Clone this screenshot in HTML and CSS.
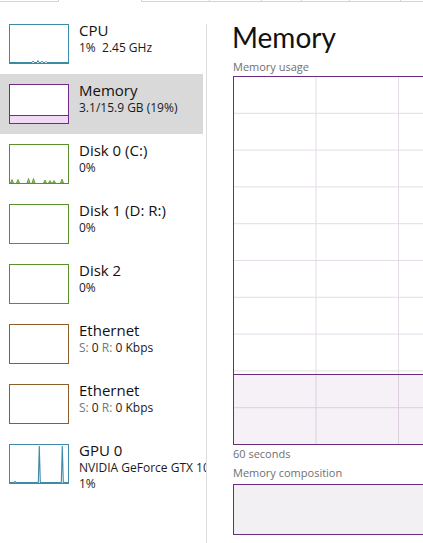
FILE: index.html
```html
<!DOCTYPE html>
<html>
<head>
<meta charset="utf-8">
<link rel="stylesheet" href="styles.css">
</head>
<body>
<div class="tabs">
  <div class="tab t1"></div>
  <div class="tab t2 active"></div>
  <div class="tab t3"></div>
  <div class="tab t4"></div>
  <div class="tab t5"></div>
  <div class="tab t6"></div>
  <div class="tab t7"></div>
  <div class="tab t8"></div>
</div>
<div class="main">
  <div class="sidebar">
    <div class="item">
      <div class="thumb cpu">
        <svg viewBox="0 0 58 38" width="58" height="38"><polyline points="0,37.5 22,37.5 23,36 24,37.5 27,37.5 28,35.5 29,37.5 31,37.5 32,36 33,37.5 35,37.5 36,36.5 37,37.5 58,37.5" fill="none" stroke="#3a8ba3" stroke-width="1"/></svg>
      </div>
      <div class="info">
        <div class="name">CPU</div>
        <div class="sub">1%&nbsp; 2.45 GHz</div>
      </div>
    </div>
    <div class="item selected">
      <div class="thumb mem">
        <div class="memfill"></div>
      </div>
      <div class="info">
        <div class="name">Memory</div>
        <div class="sub">3.1/15.9 GB (19%)</div>
      </div>
    </div>
    <div class="item">
      <div class="thumb disk">
        <svg viewBox="0 0 58 38" width="58" height="38">
          <g fill="#9cc87a" stroke="#5b8f2c" stroke-width="0.8">
            <polygon points="0.5,38 2,34.5 3.5,38"/>
            <polygon points="6.5,38 8,34.5 9.5,38"/>
            <polygon points="17,38 18.5,33.5 20,38"/>
            <polygon points="22,38 23.5,33.5 25,38"/>
            <polygon points="33.5,38 35,35 36.5,38"/>
            <polygon points="38.5,38 40,35.5 41.5,38"/>
            <polygon points="42.5,38 44,35.5 45.5,38"/>
            <polygon points="50.5,38 52,34 53.5,38"/>
          </g>
        </svg>
      </div>
      <div class="info">
        <div class="name">Disk 0 (C:)</div>
        <div class="sub">0%</div>
      </div>
    </div>
    <div class="item">
      <div class="thumb disk"></div>
      <div class="info">
        <div class="name">Disk 1 (D: R:)</div>
        <div class="sub">0%</div>
      </div>
    </div>
    <div class="item">
      <div class="thumb disk"></div>
      <div class="info">
        <div class="name">Disk 2</div>
        <div class="sub">0%</div>
      </div>
    </div>
    <div class="item">
      <div class="thumb eth"></div>
      <div class="info">
        <div class="name">Ethernet</div>
        <div class="sub"><span class="lbl">S:</span> 0 <span class="lbl">R:</span> 0 Kbps</div>
      </div>
    </div>
    <div class="item">
      <div class="thumb eth"></div>
      <div class="info">
        <div class="name">Ethernet</div>
        <div class="sub"><span class="lbl">S:</span> 0 <span class="lbl">R:</span> 0 Kbps</div>
      </div>
    </div>
    <div class="item">
      <div class="thumb gpu">
        <svg viewBox="0 0 58 38" width="58" height="38"><polyline points="0,37.5 4,37.5 5,36.5 6,37.5 28.3,37.5 29.3,1 30.3,37.5 51.3,37.5 52.3,1 53.3,37.5 58,37.5" fill="none" stroke="#3f8aa8" stroke-width="1.1"/></svg>
      </div>
      <div class="info">
        <div class="name">GPU 0</div>
        <div class="sub">NVIDIA GeForce GTX 1060</div>
        <div class="sub">1%</div>
      </div>
    </div>
  </div>
  <div class="divider"></div>
  <div class="pane">
    <div class="title">Memory</div>
    <div class="label">Memory usage</div>
    <div class="chart">
      <div class="spacer"></div>
      <div class="used" style="height:19%"></div>
    </div>
    <div class="label l60">60 seconds</div>
    <div class="label lcomp">Memory composition</div>
    <div class="comp"></div>
  </div>
</div>
</body>
</html>
```
FILE: styles.css
```css
html, body {
  margin: 0;
  padding: 0;
  background: #ffffff;
  width: 423px;
  height: 543px;
  overflow: hidden;
  font-family: "Open Sans", "Noto Sans", sans-serif;
  color: #111;
}

.tabs {
  display: flex;
  height: 2px;
}
.tab {
  box-sizing: border-box;
  height: 2px;
  border-bottom: 1px solid #d4d4d4;
  border-right: 1px solid #d4d4d4;
}
.tab.active { border-bottom: none; }
.t1 { width: 59px; }
.t2 { width: 83px; }
.t3 { width: 68px; }
.t4 { width: 52px; }
.t5 { width: 40px; }
.t6 { width: 48px; }
.t7 { width: 51px; }
.t8 { flex: 1; border-right: none; }

.main {
  display: flex;
  height: 541px;
}

.sidebar {
  width: 206px;
  flex: none;
  overflow: hidden;
  padding-top: 12px;
}

.item {
  width: 203px;
  height: 60px;
  box-sizing: border-box;
  padding: 10px 0 10px 9px;
  display: flex;
  gap: 10px;
  align-items: flex-start;
  white-space: nowrap;
}
.item.selected { background: #d9d9d9; }

.thumb {
  box-sizing: border-box;
  width: 60px;
  height: 40px;
  flex: none;
  border: 1px solid;
  background: #fff;
  display: flex;
  flex-direction: column;
  justify-content: flex-end;
}
.thumb svg { display: block; }
.cpu { border-color: #3a8ba3; }
.mem { border-color: #6f2c87; }
.disk { border-color: #5b8f2c; }
.eth { border-color: #8b5e2e; }
.gpu { border-color: #3f8aa8; }

.memfill {
  height: 7px;
  border-top: 1px solid #6f2c87;
  background: #f2d9f5;
}

.info {
  margin-top: -3px;
  display: flex;
  flex-direction: column;
}
.name {
  font-size: 15px;
  line-height: 19px;
  color: #111;
}
.sub {
  font-size: 12px;
  line-height: 16px;
  color: #1a1a1a;
}
.lbl { color: #777; }

.divider {
  width: 1px;
  flex: none;
  background: #dcdcdc;
  margin-top: 22px;
}

.pane {
  flex: 1;
  min-width: 0;
  overflow: hidden;
  padding-left: 26px;
  display: flex;
  flex-direction: column;
}

.title {
  font-family: "Lato", "Open Sans", sans-serif;
  font-size: 28px;
  line-height: 35px;
  margin-top: 18px;
  margin-left: -1px;
  color: #111;
  white-space: nowrap;
}

.label {
  font-size: 11px;
  line-height: 15px;
  color: #707070;
  white-space: nowrap;
}
.title + .label { margin-top: 4px; }

.chart {
  box-sizing: border-box;
  width: 830px;
  height: 369px;
  flex: none;
  margin-top: 2px;
  border: 1px solid #6a2c7e;
  display: flex;
  flex-direction: column;
  background-color: #fff;
  background-image:
    linear-gradient(to right, transparent 81.5px, #e4dbe6 81.5px),
    linear-gradient(to bottom, transparent 35.8px, #e4dbe6 35.8px);
  background-size: 82.5px 100%, 100% 36.8px;
}
.spacer { flex: 1; }
.used {
  box-sizing: border-box;
  border-top: 1px solid #6a2c7e;
  background: rgba(110, 60, 130, 0.07);
}

.l60 { margin-top: 1px; }
.lcomp { margin-top: 4px; }

.comp {
  box-sizing: border-box;
  width: 830px;
  height: 51px;
  flex: none;
  margin-top: 4px;
  border: 1px solid #6a2c7e;
  background: #f3f0f4;
}
```
